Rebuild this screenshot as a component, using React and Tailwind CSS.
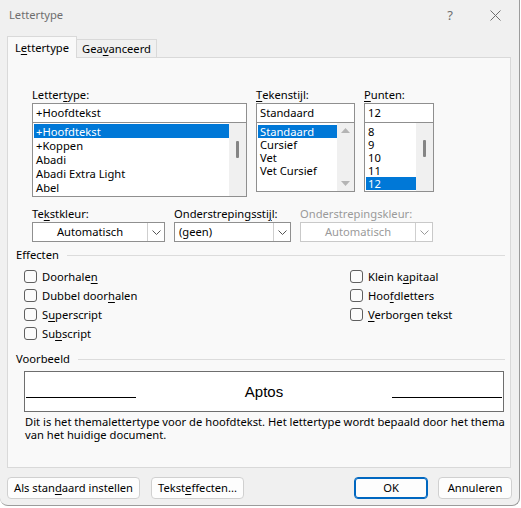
import React from "react";

function U({ children }) {
  return <span className="underline underline-offset-[2px] decoration-1">{children}</span>;
}

function Dropdown({ className, children, center, disabled }) {
  return (
    <div
      className={`flex h-[20px] bg-white border ${
        disabled ? "border-[#c9c9c9] text-[#9a9a9a]" : "border-[#8f8f8f]"
      } ${className}`}
    >
      <div className={`flex-1 flex items-center ${center ? "justify-center" : "pl-[4px]"}`}>{children}</div>
      <div className="w-[17px] border-l border-[#cfcfcf] flex items-center justify-center">
        <svg width="9" height="5" viewBox="0 0 9 5">
          <path d="M0.5 0.5 L4.5 4.5 L8.5 0.5" fill="none" stroke={disabled ? "#9a9a9a" : "#555"} />
        </svg>
      </div>
    </div>
  );
}

function Check({ children }) {
  return (
    <div className="flex items-center h-[19px]">
      <div className="w-[13px] h-[13px] rounded-[3px] border border-[#5f5f5f] bg-[#fbfbfb]" />
      <span className="ml-[5px]">{children}</span>
    </div>
  );
}

function ListRow({ selected, children, h }) {
  return (
    <div
      className={`${h} flex items-center pl-[2px] leading-[13px] ${selected ? "bg-[#0078d7] text-white" : ""}`}
    >
      {children}
    </div>
  );
}

function Button({ className, children, primary }) {
  return (
    <div
      className={`h-[22px] flex items-center justify-center rounded-[4px] bg-[#fdfdfd] ${
        primary ? "border border-[#0067c0] shadow-[inset_0_0_0_1px_#0067c0]" : "border border-[#d0d0d0]"
      } ${className}`}
    >
      {children}
    </div>
  );
}

export default function App() {
  return (
    <div className="w-[521px] h-[508px] bg-white font-['Noto_Sans',sans-serif] text-[11.2px] leading-[14px] text-black">
      <div className="w-[520px] h-[506px] bg-[#f0f0f0] border-r border-b border-[#9c9c9c] rounded-b-[8px] flex flex-col overflow-hidden">
        {/* title bar */}
        <div className="h-[30px] flex items-center pl-[9px] text-[#6e6e6e]">
          <span>Lettertype</span>
          <span className="ml-auto mr-[37px] text-[13px]">?</span>
          <svg width="11" height="11" viewBox="0 0 11 11" className="mr-[18px]">
            <path d="M0.5 0.5 L10.5 10.5 M10.5 0.5 L0.5 10.5" stroke="#6e6e6e" strokeWidth="1" />
          </svg>
        </div>

        {/* tabs */}
        <div className="flex items-end pl-[7px] mt-[6px] h-[21px]">
          <div className="relative z-10 w-[70px] h-[22px] -mb-px bg-[#f9f9f9] border border-b-0 border-[#d9d9d9] flex items-center justify-center">
            L<U>e</U>ttertype
          </div>
          <div className="w-[80px] h-[18px] bg-[#f0f0f0] border border-l-0 border-b-0 border-[#d9d9d9] flex items-center justify-center">
            Gea<U>v</U>anceerd
          </div>
        </div>

        {/* panel */}
        <div className="ml-[7px] w-[504px] h-[411px] bg-[#f9f9f9] border border-[#d9d9d9] flex flex-col pl-[8px] pr-[5px]">
          {/* font row */}
          <div className="flex ml-[16px] mt-[28px]">
            <div className="w-[215px] flex flex-col">
              <div className="h-[17px] flex items-center">Letter<U>t</U>ype:</div>
              <div className="h-[20px] border border-[#8f8f8f] bg-white flex items-center pl-[3px]">+Hoofdtekst</div>
              <div className="h-[74px] border border-t-0 border-[#8f8f8f] bg-white flex">
                <div className="flex-1 pl-[1px] pt-[1px]">
                  <ListRow h="h-[14px]" selected>+Hoofdtekst</ListRow>
                  <ListRow h="h-[14px]">+Koppen</ListRow>
                  <ListRow h="h-[14px]">Abadi</ListRow>
                  <ListRow h="h-[14px]">Abadi Extra Light</ListRow>
                  <ListRow h="h-[14px]">Abel</ListRow>
                </div>
                <div className="w-[17px] bg-[#f0f0f0] flex justify-center pt-[18px]">
                  <div className="w-[3px] h-[17px] bg-[#858585] rounded-[1px]" />
                </div>
              </div>
            </div>

            <div className="w-[99px] ml-[9px] flex flex-col">
              <div className="h-[17px] flex items-center"><U>T</U>ekenstijl:</div>
              <div className="h-[20px] border border-[#8f8f8f] bg-white flex items-center pl-[3px]">Standaard</div>
              <div className="h-[69px] border border-t-0 border-[#8f8f8f] bg-white flex">
                <div className="flex-1 pl-[1px] pt-[2px]">
                  <ListRow h="h-[13px]" selected>Standaard</ListRow>
                  <ListRow h="h-[13px]">Cursief</ListRow>
                  <ListRow h="h-[13px]">Vet</ListRow>
                  <ListRow h="h-[13px]">Vet Cursief</ListRow>
                </div>
                <div className="w-[17px] bg-[#f0f0f0] flex flex-col items-center justify-between py-[5px]">
                  <svg width="9" height="5" viewBox="0 0 9 5"><path d="M0 5 L4.5 0 L9 5 Z" fill="#b4b4b4" /></svg>
                  <svg width="9" height="5" viewBox="0 0 9 5"><path d="M0 0 L4.5 5 L9 0 Z" fill="#b4b4b4" /></svg>
                </div>
              </div>
            </div>

            <div className="w-[70px] ml-[9px] flex flex-col">
              <div className="h-[17px] flex items-center"><U>P</U>unten:</div>
              <div className="h-[20px] border border-[#8f8f8f] bg-white flex items-center pl-[3px]">12</div>
              <div className="h-[69px] border border-t-0 border-[#8f8f8f] bg-white flex">
                <div className="flex-1 pl-[1px] pt-[2px]">
                  <ListRow h="h-[13px]">8</ListRow>
                  <ListRow h="h-[13px]">9</ListRow>
                  <ListRow h="h-[13px]">10</ListRow>
                  <ListRow h="h-[13px]">11</ListRow>
                  <ListRow h="h-[13px]" selected>12</ListRow>
                </div>
                <div className="w-[17px] bg-[#f0f0f0] flex justify-center pt-[17px]">
                  <div className="w-[3px] h-[17px] bg-[#858585] rounded-[1px]" />
                </div>
              </div>
            </div>
          </div>

          {/* colour row */}
          <div className="flex ml-[16px] mt-[8px]">
            <div className="w-[133px] flex flex-col">
              <div className="h-[17px] flex items-center">Te<U>k</U>stkleur:</div>
              <Dropdown className="w-[133px]" center>Automatisch</Dropdown>
            </div>
            <div className="w-[117px] ml-[9px] flex flex-col">
              <div className="h-[17px] flex items-center">Onderstrepingssti<U>j</U>l:</div>
              <Dropdown className="w-[117px]">(geen)</Dropdown>
            </div>
            <div className="w-[133px] ml-[9px] flex flex-col">
              <div className="h-[17px] flex items-center text-[#9a9a9a]">Onderstrepingskleur:</div>
              <Dropdown className="w-[133px]" center disabled>Automatisch</Dropdown>
            </div>
          </div>

          {/* effects */}
          <div className="flex items-center h-[14px] mt-[6px]">
            <span>Effecten</span>
            <div className="flex-1 h-px bg-[#dcdcdc] ml-[8px]" />
          </div>
          <div className="flex ml-[8px] mt-[5px]">
            <div className="w-[326px] flex flex-col">
              <Check>Doorhale<U>n</U></Check>
              <Check>Dubbel door<U>h</U>alen</Check>
              <Check>S<U>u</U>perscript</Check>
              <Check>Su<U>b</U>script</Check>
            </div>
            <div className="flex flex-col">
              <Check>Klein k<U>a</U>pitaal</Check>
              <Check>Hoo<U>f</U>dletters</Check>
              <Check><U>V</U>erborgen tekst</Check>
            </div>
          </div>

          {/* preview */}
          <div className="flex items-center h-[14px] mt-[9px]">
            <span>Voorbeeld</span>
            <div className="flex-1 h-px bg-[#dcdcdc] ml-[8px]" />
          </div>
          <div className="ml-[8px] mt-[5px] w-[480px] h-[41px] border border-[#6e6e6e] bg-white flex items-center px-px">
            <div className="w-[110px] h-px bg-black self-end mb-[13px]" />
            <div className="flex-1 flex justify-center font-['Liberation_Sans',sans-serif] text-[15px] leading-[16px] pt-[1px]">
              Aptos
            </div>
            <div className="w-[110px] h-px bg-black self-end mb-[13px]" />
          </div>
          <div className="ml-[9px] mt-[3px] leading-[13px] whitespace-nowrap">
            Dit is het themalettertype voor de hoofdtekst. Het lettertype wordt bepaald door het thema
            <br />
            van het huidige document.
          </div>
        </div>

        {/* buttons */}
        <div className="flex mt-[9px] pl-[7px]">
          <Button className="w-[133px]">Als stan<U>d</U>aard instellen</Button>
          <Button className="w-[93px] ml-[11px]">Tekst<U>e</U>ffecten...</Button>
          <Button className="w-[74px] ml-[110px]" primary>OK</Button>
          <Button className="w-[74px] ml-[10px]">Annuleren</Button>
        </div>
      </div>
    </div>
  );
}
